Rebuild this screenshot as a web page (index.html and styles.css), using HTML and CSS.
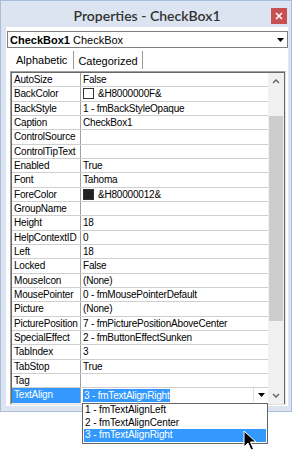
FILE: index.html
```html
<!DOCTYPE html>
<html lang="en">
<head>
    <meta charset="UTF-8">
    <title>Properties - CheckBox1</title>
    <link rel="stylesheet" href="styles.css">
</head>
<body>
    <div class="window">
        <div class="titlebar">
            <span></span>
            <span class="title">Properties - CheckBox1</span>
            <span class="close">
                <svg width="8" height="8" viewBox="0 0 8 8"><path d="M1 1 L7 7 M7 1 L1 7" stroke="#fff" stroke-width="1.6"/></svg>
            </span>
        </div>
        <div class="client">
            <div class="combo">
                <span class="combo-text"><b>CheckBox1</b> CheckBox</span>
                <span class="combo-btn">
                    <svg width="7" height="5" viewBox="0 0 7 5"><path d="M0 0 L7 0 L3.5 4 Z" fill="#000"/></svg>
                </span>
            </div>
            <div class="tabs">
                <span class="tab active">Alphabetic</span>
                <span class="tab">Categorized</span>
            </div>
            <div class="grid-box">
                <div class="rows">
                    <div class="row"><span class="name">AutoSize</span><span class="value">False</span></div>
                    <div class="row"><span class="name">BackColor</span><span class="value"><i class="swatch"></i>&amp;H8000000F&amp;</span></div>
                    <div class="row"><span class="name">BackStyle</span><span class="value">1 - fmBackStyleOpaque</span></div>
                    <div class="row"><span class="name">Caption</span><span class="value">CheckBox1</span></div>
                    <div class="row"><span class="name">ControlSource</span><span class="value"></span></div>
                    <div class="row"><span class="name">ControlTipText</span><span class="value"></span></div>
                    <div class="row"><span class="name">Enabled</span><span class="value">True</span></div>
                    <div class="row"><span class="name">Font</span><span class="value">Tahoma</span></div>
                    <div class="row"><span class="name">ForeColor</span><span class="value"><i class="swatch dark"></i>&amp;H80000012&amp;</span></div>
                    <div class="row"><span class="name">GroupName</span><span class="value"></span></div>
                    <div class="row"><span class="name">Height</span><span class="value">18</span></div>
                    <div class="row"><span class="name">HelpContextID</span><span class="value">0</span></div>
                    <div class="row"><span class="name">Left</span><span class="value">18</span></div>
                    <div class="row"><span class="name">Locked</span><span class="value">False</span></div>
                    <div class="row"><span class="name">MouseIcon</span><span class="value">(None)</span></div>
                    <div class="row"><span class="name">MousePointer</span><span class="value">0 - fmMousePointerDefault</span></div>
                    <div class="row"><span class="name">Picture</span><span class="value">(None)</span></div>
                    <div class="row"><span class="name">PicturePosition</span><span class="value">7 - fmPicturePositionAboveCenter</span></div>
                    <div class="row"><span class="name">SpecialEffect</span><span class="value">2 - fmButtonEffectSunken</span></div>
                    <div class="row"><span class="name">TabIndex</span><span class="value">3</span></div>
                    <div class="row"><span class="name">TabStop</span><span class="value">True</span></div>
                    <div class="row"><span class="name">Tag</span><span class="value"></span></div>
                    <div class="row selected">
                        <span class="name">TextAlign</span>
                        <span class="value"><span class="sel-text">3 - fmTextAlignRight</span>
                            <span class="drop-btn">
                                <svg width="7" height="5" viewBox="0 0 7 5"><path d="M0 0 L7 0 L3.5 4 Z" fill="#000"/></svg>
                            </span>
                        </span>
                    </div>
                </div>
                <div class="scrollbar">
                    <span class="arrow">
                        <svg width="8" height="5" viewBox="0 0 8 5"><path d="M1 4 L4 1 L7 4" stroke="#606060" stroke-width="1.3" fill="none"/></svg>
                    </span>
                    <div class="track">
                        <div class="thumb"></div>
                    </div>
                    <span class="arrow">
                        <svg width="8" height="5" viewBox="0 0 8 5"><path d="M1 1 L4 4 L7 1" stroke="#606060" stroke-width="1.3" fill="none"/></svg>
                    </span>
                </div>
            </div>
        </div>
    </div>

    <div class="dropdown">
        <div class="item">1 - fmTextAlignLeft</div>
        <div class="item">2 - fmTextAlignCenter</div>
        <div class="item active">3 - fmTextAlignRight</div>
    </div>

    <svg class="cursor" width="14" height="22" viewBox="0 0 14 22">
        <path d="M1 1 L1 17 L5 13 L8 20 L10.5 19 L7.5 12 L13 12 Z" fill="#000" stroke="#fff" stroke-width="1"/>
    </svg>
</body>
</html>
```

FILE: styles.css
```css
body {
    margin: 0;
    background-color: #fff;
    font-family: "Liberation Sans", Arial, sans-serif;
    font-size: 10px;
    color: #000;
    width: 296px;
    height: 450px;
    overflow: hidden;
}
.window {
    width: 292px;
    background-color: #dbe4f0;
    border: 1px solid #a9bdd8;
    box-sizing: border-box;
    padding: 0 3px 5px 5px;
}
.titlebar {
    height: 26px;
    display: grid;
    grid-template-columns: 1fr auto 1fr;
    align-items: center;
}
.title {
    font-family: Lato, "Open Sans", sans-serif;
    font-size: 14px;
    font-weight: 600;
    color: #333;
    padding-top: 2px;
}
.close {
    justify-self: end;
    width: 16px;
    height: 16px;
    margin-right: 1px;
    margin-top: 4px;
    background-color: #c75050;
    display: flex;
    align-items: center;
    justify-content: center;
}
.client {
    background-color: #fff;
    padding: 4px 0 1px 0;
}
.combo {
    height: 17px;
    margin: 0 0 0 1px;
    border: 1px solid #7f7f7f;
    box-sizing: border-box;
    display: flex;
    align-items: center;
    font-size: 11px;
}
.combo-text {
    flex: 1;
    padding-left: 2px;
}
.combo-btn {
    width: 14px;
    display: flex;
    justify-content: center;
    padding-top: 2px;
}
.tabs {
    height: 23px;
    display: flex;
    align-items: center;
    padding-left: 6px;
    font-size: 11px;
}
.tab {
    padding: 2px 4px;
}
.tab.active {
    margin-right: 2px;
}
.tab + .tab {
    border-left: 1px solid #9a9a9a;
    border-right: 1px solid #9a9a9a;
    padding-top: 4px;
    padding-bottom: 2px;
}
.grid-box {
    margin: 0 2px 0 4px;
    display: flex;
    border: 1px solid #a0a0a0;
    border-right-color: #e3e3e3;
    border-bottom-color: #e3e3e3;
    letter-spacing: -0.2px;
}
.rows {
    flex: 1;
    border: 1px solid #696969;
    border-right: none;
    border-bottom-color: #f0f0f0;
}
.row {
    display: grid;
    grid-template-columns: 69px 1fr;
    height: 14.33px;
    box-sizing: border-box;
    border-bottom: 1px solid #cfcfcf;
    line-height: 13px;
}
.row:last-child {
    border-bottom: none;
}
.name {
    padding-left: 2px;
    border-right: 1px solid #a0a0a0;
    white-space: nowrap;
    overflow: hidden;
}
.value {
    padding-left: 2px;
    display: flex;
    align-items: center;
    white-space: nowrap;
}
.swatch {
    width: 9px;
    height: 9px;
    border: 1px solid #333;
    background-color: #fff;
    margin-right: 4px;
}
.swatch.dark {
    background-color: #222;
}
.selected .name {
    background-color: #3399ff;
    color: #fff;
}
.sel-text {
    background-color: #3399ff;
    color: #fff;
    padding: 0 1px;
}
.drop-btn {
    margin-left: auto;
    width: 14px;
    height: 14px;
    border-left: 1px solid #e0e0e0;
    display: flex;
    align-items: center;
    justify-content: center;
}
.scrollbar {
    width: 16px;
    background-color: #f0f0f0;
    display: flex;
    flex-direction: column;
    border-top: 1px solid #696969;
    border-right: 1px solid #696969;
}
.arrow {
    height: 17px;
    display: flex;
    align-items: center;
    justify-content: center;
}
.track {
    flex: 1;
    padding-top: 26px;
    padding-bottom: 66px;
    display: flex;
}
.thumb {
    flex: 1;
    margin: 0 1px;
    background-color: #cdcdcd;
}
.dropdown {
    position: absolute;
    left: 82px;
    top: 403px;
    width: 186px;
    border: 1px solid #646464;
    background-color: #fff;
    box-sizing: border-box;
    padding: 0 1px 1px 1px;
    letter-spacing: -0.1px;
}
.item {
    height: 12.5px;
    line-height: 12.5px;
    padding-left: 1px;
}
.item.active {
    background-color: #3399ff;
    color: #fff;
}
.cursor {
    position: absolute;
    left: 243px;
    top: 430px;
}
```
